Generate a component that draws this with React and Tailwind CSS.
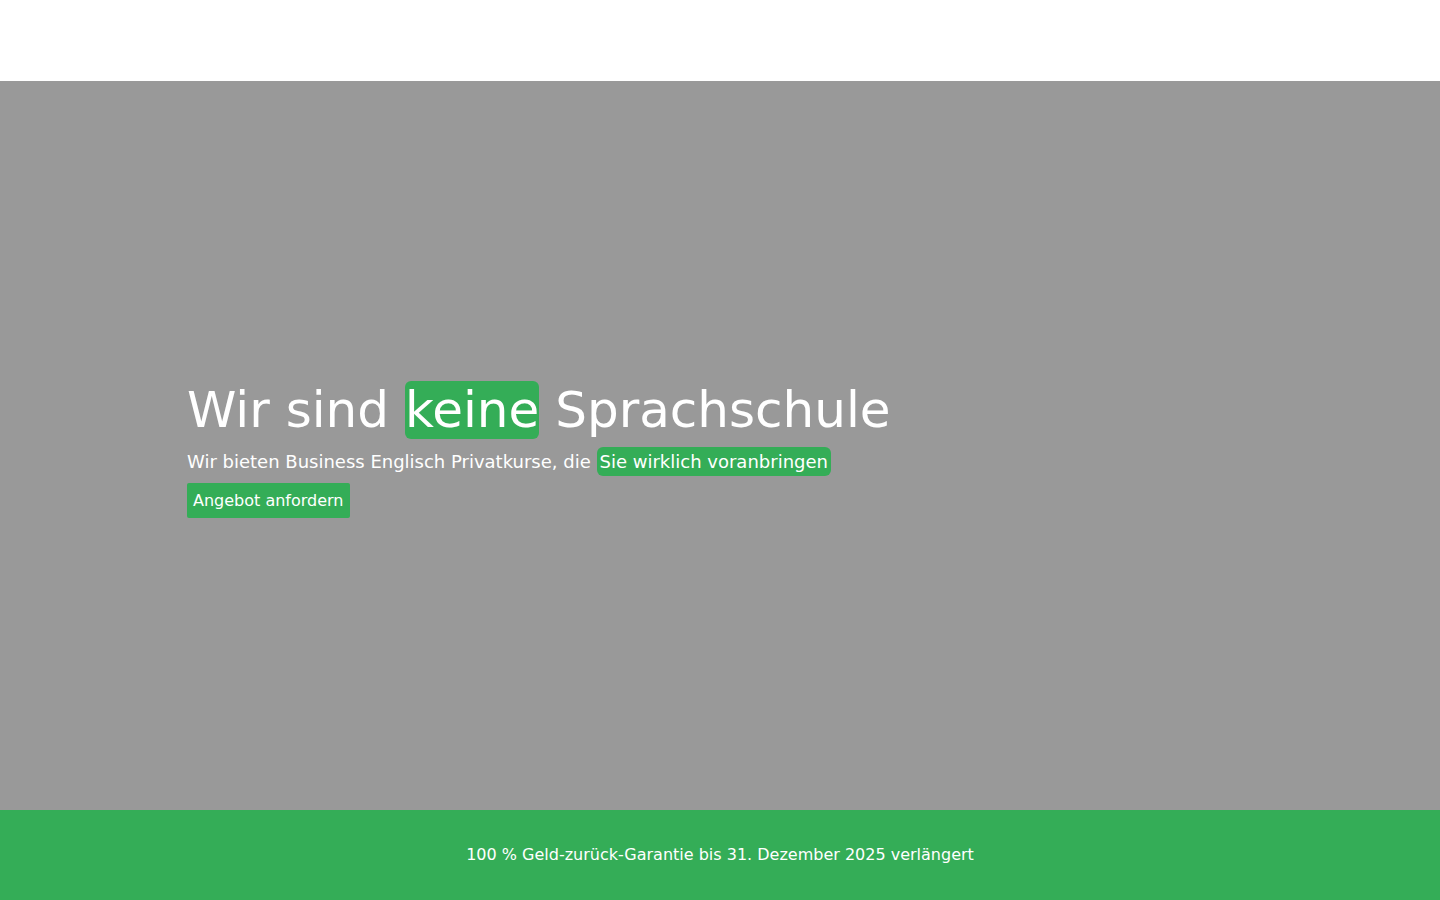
export default function App() {
  return (
    <div className="flex h-[900px] flex-col font-['DejaVu_Sans',sans-serif]">
      <header className="h-[81px] bg-white" />

      <section className="flex flex-1 items-center bg-[#999999] px-[187px] pt-[7px]">
        <div className="flex flex-col items-start">
          <h1 className="text-[50px] leading-[60px] text-white">
            Wir sind{' '}
            <span className="rounded-[6px] bg-[#34ad57]">keine</span>{' '}
            Sprachschule
          </h1>
          <p className="mt-[8px] text-[18px] leading-[28px] text-white">
            Wir bieten Business Englisch Privatkurse, die{' '}
            <span className="rounded-[6px] bg-[#34ad57] px-[3px] py-[4px]">Sie wirklich voranbringen</span>
          </p>
          <button className="mt-[7px] h-[35px] rounded-[2px] bg-[#34ad57] px-[6px] text-[16px] text-white">
            Angebot anfordern
          </button>
        </div>
      </section>

      <footer className="flex h-[90px] items-center justify-center bg-[#34ad57] text-[16px] text-white">
        100 % Geld-zurück-Garantie bis 31. Dezember 2025 verlängert
      </footer>
    </div>
  );
}
